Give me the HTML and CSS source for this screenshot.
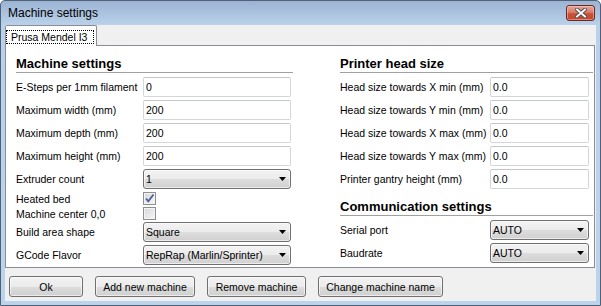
FILE: index.html
```html
<!DOCTYPE html>
<html lang="en">
<head>
    <meta charset="UTF-8">
    <meta name="viewport" content="width=device-width, initial-scale=1.0">
    <title>Machine settings</title>
    <link rel="stylesheet" href="styles.css">
</head>
<body>
    <div class="window">
        <div class="titlebar">
            <span class="title">Machine settings</span>
            <button class="close">
                <svg width="12" height="10" viewBox="0 0 12 10">
                    <path d="M2 1.5 L10 8.5 M10 1.5 L2 8.5" stroke="#505050" stroke-width="3.8" stroke-linecap="square"/>
                    <path d="M2 1.5 L10 8.5 M10 1.5 L2 8.5" stroke="#fff" stroke-width="1.9" stroke-linecap="square"/>
                </svg>
            </button>
        </div>
        <div class="client">
            <div class="tabs">
                <div class="tab"><span class="tab-label">Prusa Mendel I3</span></div>
            </div>
            <div class="panel">
                <div class="col col-left">
                    <div class="heading">Machine settings</div>
                    <div class="row"><label>E-Steps per 1mm filament</label><input class="text" value="0"></div>
                    <div class="row"><label>Maximum width (mm)</label><input class="text" value="200"></div>
                    <div class="row"><label>Maximum depth (mm)</label><input class="text" value="200"></div>
                    <div class="row"><label>Maximum height (mm)</label><input class="text" value="200"></div>
                    <div class="row"><label>Extruder count</label><div class="combo"><span>1</span><svg class="arrow" width="7" height="4" viewBox="0 0 7 4"><polygon points="0,0 7,0 3.5,4" fill="#000"/></svg></div></div>
                    <div class="row check"><label>Heated bed</label><span class="checkbox"><svg width="11" height="11" viewBox="0 0 11 11"><path d="M2 5.5 L4.3 8.3 L9.5 1.5" stroke="#4a5f97" stroke-width="1.8" fill="none"/></svg></span></div>
                    <div class="row check"><label>Machine center 0,0</label><span class="checkbox"></span></div>
                    <div class="row"><label>Build area shape</label><div class="combo"><span>Square</span><svg class="arrow" width="7" height="4" viewBox="0 0 7 4"><polygon points="0,0 7,0 3.5,4" fill="#000"/></svg></div></div>
                    <div class="row"><label>GCode Flavor</label><div class="combo"><span>RepRap (Marlin/Sprinter)</span><svg class="arrow" width="7" height="4" viewBox="0 0 7 4"><polygon points="0,0 7,0 3.5,4" fill="#000"/></svg></div></div>
                </div>
                <div class="col col-right">
                    <div class="heading">Printer head size</div>
                    <div class="row"><label>Head size towards X min (mm)</label><input class="text" value="0.0"></div>
                    <div class="row"><label>Head size towards Y min (mm)</label><input class="text" value="0.0"></div>
                    <div class="row"><label>Head size towards X max (mm)</label><input class="text" value="0.0"></div>
                    <div class="row"><label>Head size towards Y max (mm)</label><input class="text" value="0.0"></div>
                    <div class="row"><label>Printer gantry height (mm)</label><input class="text" value="0.0"></div>
                    <div class="heading heading-second">Communication settings</div>
                    <div class="row"><label>Serial port</label><div class="combo"><span>AUTO</span><svg class="arrow" width="7" height="4" viewBox="0 0 7 4"><polygon points="0,0 7,0 3.5,4" fill="#000"/></svg></div></div>
                    <div class="row"><label>Baudrate</label><div class="combo"><span>AUTO</span><svg class="arrow" width="7" height="4" viewBox="0 0 7 4"><polygon points="0,0 7,0 3.5,4" fill="#000"/></svg></div></div>
                </div>
            </div>
            <div class="buttons">
                <button class="btn btn-ok">Ok</button>
                <button class="btn btn-add">Add new machine</button>
                <button class="btn btn-remove">Remove machine</button>
                <button class="btn btn-rename">Change machine name</button>
            </div>
        </div>
    </div>
</body>
</html>
```

FILE: styles.css
```css
* {
    margin: 0;
    padding: 0;
    box-sizing: border-box;
}
body {
    width: 601px;
    height: 306px;
    overflow: hidden;
    background: #fff;
    font-family: "Liberation Sans", Arial, sans-serif;
    font-size: 10.5px;
    color: #000;
}
.window {
    width: 601px;
    height: 306px;
    display: flex;
    flex-direction: column;
    border: 1px solid #4f6177;
    border-radius: 5px 5px 0 0;
    background: linear-gradient(#9cb4d2, #b9d1ea 24px, #bcd3ec);
    padding: 0 4px 4px;
}
.titlebar {
    height: 24px;
    display: flex;
    align-items: center;
    justify-content: space-between;
    padding-left: 3px;
}
.title {
    font-size: 12px;
    color: #000;
}
.close {
    width: 29px;
    height: 16px;
    margin-right: 1px;
    display: flex;
    align-items: center;
    justify-content: center;
    border: 1px solid #6a2a22;
    border-radius: 3px;
    background: linear-gradient(#e6a597, #d77d69 45%, #c9523a 55%, #c4462c);
    box-shadow: inset 0 0 0 1px rgba(255, 220, 210, 0.45);
}
.client {
    flex: 1;
    background: #f0f0f0;
}
.tabs {
    height: 20px;
}
.tab {
    position: relative;
    z-index: 1;
    width: 92px;
    height: 21px;
    border: 1px solid #898c95;
    border-bottom: none;
    border-radius: 2px 2px 0 0;
    background: #fff;
}
.tab-label {
    display: block;
    width: 88px;
    height: 14px;
    margin-top: 4px;
    padding: 0 4px;
    border: 1px dotted #000;
    line-height: 12px;
    white-space: nowrap;
}
.panel {
    width: 590px;
    height: 223px;
    display: flex;
    border: 1px solid #898c95;
    background: #fff;
    padding: 10px 0 0 10px;
}
.col-left {
    width: 277px;
}
.col-right {
    width: 253px;
    margin-left: 47px;
}
.heading {
    height: 17px;
    border-bottom: 1px solid #a0a0a0;
    font-size: 13px;
    font-weight: bold;
    line-height: 15px;
    margin-bottom: 4px;
    white-space: nowrap;
}
.heading-second {
    margin-top: 10px;
}
.row {
    display: grid;
    align-items: center;
    height: 20px;
    margin-bottom: 3px;
    white-space: nowrap;
}
.col-left .row {
    grid-template-columns: 127px 148px;
}
.col-right .row {
    grid-template-columns: 150px 99px;
}
.row.check {
    height: 13px;
    margin-bottom: 2px;
}
.check + .row:not(.check) {
    margin-top: 1px;
}
.text {
    height: 20px;
    border: 1px solid #d3d7dd;
    border-top-color: #c2c6cc;
    border-radius: 2px;
    padding: 0 2px;
    font: inherit;
    color: #000;
    background: #fff;
    outline: none;
}
.combo {
    height: 20px;
    display: flex;
    align-items: center;
    justify-content: space-between;
    padding: 0 4px 0 2px;
    border: 1px solid #707070;
    border-radius: 3px;
    background: linear-gradient(#f3f3f3, #ebebeb 50%, #dddddd 50%, #d0d0d0);
    box-shadow: inset 0 0 0 1px rgba(255, 255, 255, 0.6);
}
.checkbox {
    width: 13px;
    height: 13px;
    display: flex;
    align-items: center;
    justify-content: center;
    border: 1px solid #8e8f8f;
    background: linear-gradient(135deg, #d2d5da, #f7f7f7);
    box-shadow: inset 0 0 0 1px #f4f4f4;
}
.buttons {
    display: flex;
    gap: 12px;
    padding: 8px 0 0 4px;
}
.btn {
    height: 21px;
    border: 1px solid #707070;
    border-radius: 3px;
    background: linear-gradient(#f2f2f2, #ebebeb 50%, #dddddd 50%, #cfcfcf);
    box-shadow: inset 0 0 0 1px rgba(255, 255, 255, 0.6);
    font: inherit;
    color: #000;
}
.btn-ok { width: 74px; }
.btn-add { width: 100px; }
.btn-remove { width: 99px; }
.btn-rename { width: 125px; }
```
